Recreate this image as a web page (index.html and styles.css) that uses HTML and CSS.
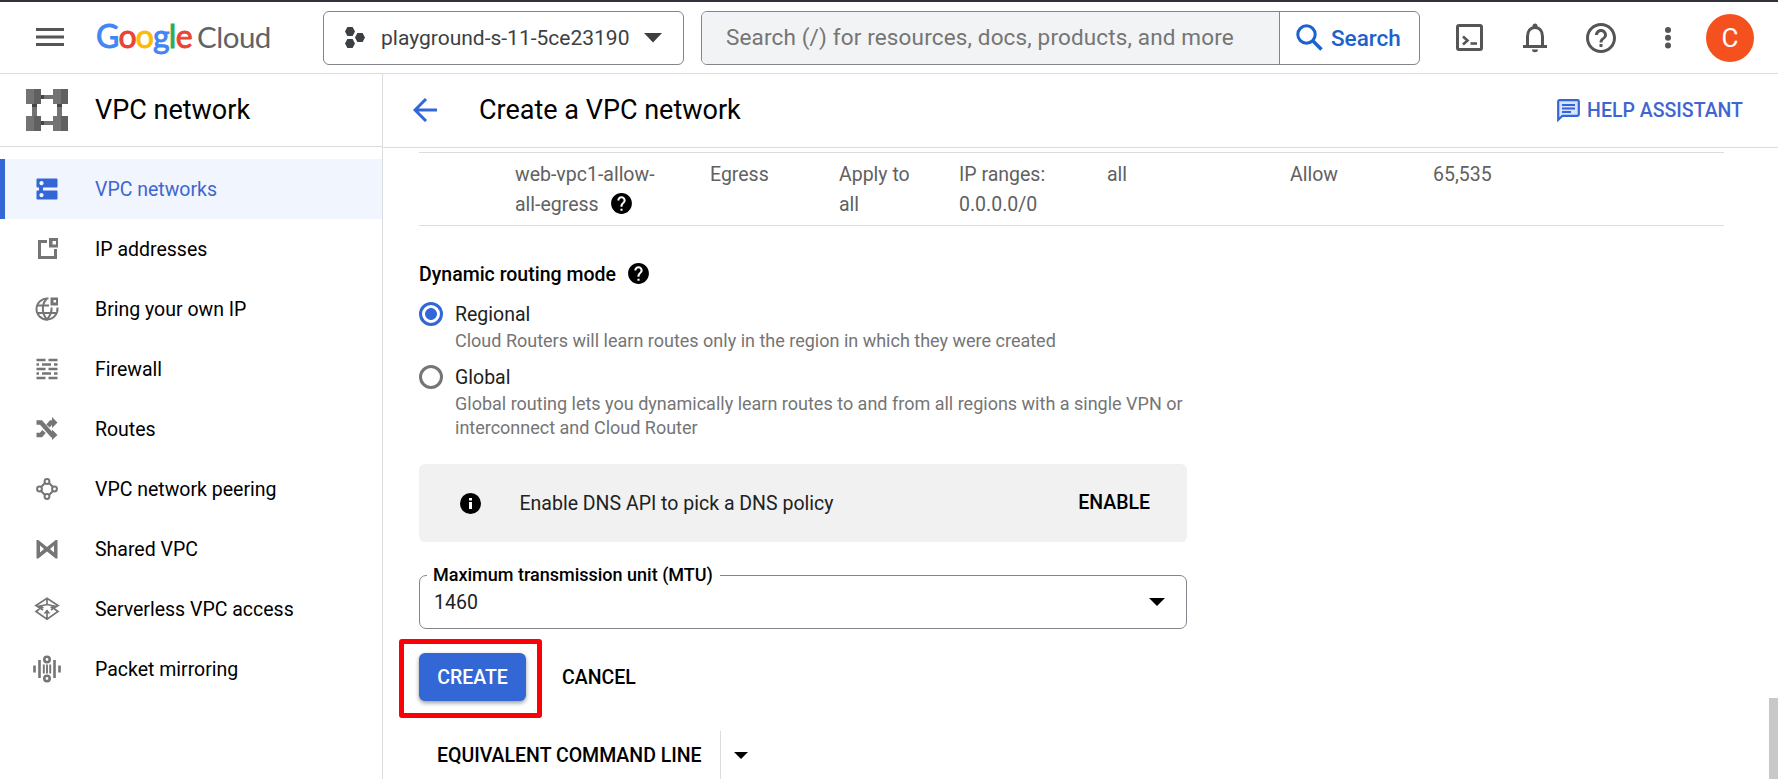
FILE: index.html
```html
<!DOCTYPE html>
<html lang="en">
<head>
<meta charset="utf-8">
<title>Create a VPC network</title>
<link rel="stylesheet" href="styles.css">
</head>
<body>
<header class="topbar">
  <svg class="menu" width="28" height="18" viewBox="0 0 28 18"><path d="M0 1.500h28M0 9h28M0 16.500h28" stroke="#555" stroke-width="3"/></svg>
  <div class="logo"><span class="google"><span class="b">G</span><span class="r">o</span><span class="y">o</span><span class="b">g</span><span class="g">l</span><span class="r">e</span></span><span class="cloud">Cloud</span></div>
  <div class="project">
    <svg width="20" height="22" viewBox="0 0 20 22" fill="#3c4043"><path d="M2.400 0h5.200L10 4.500 7.600 9H2.400L0 4.500zM12.400 6h5.200L20 10.500 17.600 15h-5.200L10 10.500zM2.400 12h5.200L10 16.500 7.600 21H2.400L0 16.500z"/></svg>
    <span class="project-name">playground-s-11-5ce23190</span>
    <svg width="18" height="10" viewBox="0 0 18 10"><path d="M0 0h18L9 9.500z" fill="#3c4043"/></svg>
  </div>
  <div class="search">
    <div class="search-input">Search (/) for resources, docs, products, and more</div>
    <div class="search-button">
      <svg width="27" height="27" viewBox="0 0 27 27" fill="none" stroke="#1c62cc"><circle cx="10.500" cy="10.500" r="8.700" stroke-width="3"/><path d="M16.500 16.500l9 9" stroke-width="3.600"/></svg>
      <span>Search</span>
    </div>
  </div>
  <div class="tools">
    <svg class="shell" width="27" height="27" viewBox="0 0 27 27" fill="none" stroke="#555"><rect x="1.500" y="1.500" width="24" height="24" rx="1.500" stroke-width="3"/><path d="M7 12.500l4.500 4-4.500 4" stroke-width="2.600"/><path d="M14.500 19.500H21" stroke-width="2.600"/></svg>
    <svg class="bell" width="24" height="30" viewBox="0 0 24 30"><path d="M4.500 23V13.500C4.500 8 7.500 4.500 12 4.500s7.500 3.500 7.500 9V23" fill="none" stroke="#555" stroke-width="3"/><path d="M0 22h24v3H0z" fill="#555"/><circle cx="12" cy="3" r="2.500" fill="#555"/><path d="M9 26.500h6a3 2.800 0 0 1-6 0z" fill="#555"/></svg>
    <svg class="help" viewBox="0 0 24 24" fill="#555"><path d="M11 18h2v-2h-2v2zm1-16C6.480 2 2 6.480 2 12s4.480 10 10 10 10-4.480 10-10S17.520 2 12 2zm0 18c-4.410 0-8-3.590-8-8s3.590-8 8-8 8 3.590 8 8-3.590 8-8 8zm0-14c-2.210 0-4 1.790-4 4h2c0-1.100.9-2 2-2s2 .9 2 2c0 2-3 1.750-3 5h2c0-2.250 3-2.500 3-5 0-2.210-1.790-4-4-4z"/></svg>
    <svg class="more" width="6" height="22" viewBox="0 0 6 22" fill="#555"><circle cx="3" cy="3" r="3"/><circle cx="3" cy="10.800" r="3"/><circle cx="3" cy="18.500" r="3"/></svg>
    <div class="avatar">C</div>
  </div>
</header>
<div class="body">
  <aside class="sidebar">
    <div class="product">
      <svg width="42" height="42" viewBox="0 0 42 42"><path d="M6 15h5v12H6zM31 15h5v12h-5zM15 6h12v4H15zM15 32h12v4H15z" fill="#737373"/><path d="M6 15h5v3H6zM31 15h5v3h-5zM15 6h3v4h-3zM15 32h3v4h-3z" fill="#444"/><path d="M0 0h15v15H0zM27 0h15v15H27zM0 27h15v15H0zM27 27h15v15H27z" fill="#737373"/><path d="M8 0h7v15H8zM35 0h7v15h-7zM8 27h7v15H8zM35 27h7v15h-7z" fill="#606060"/></svg>
      <span>VPC network</span>
    </div>
    <nav class="nav">
      <div class="item active"><svg viewBox="0 0 28 28"><path fill="#3367d6" fill-rule="evenodd" d="M4.500 3.500h19a1 1 0 0 1 1 1v7a1 1 0 0 1-1 1H10v3h13.500a1 1 0 0 1 1 1v7a1 1 0 0 1-1 1h-19a1 1 0 0 1-1-1v-7a1 1 0 0 1 1-1H6v-3H4.500a1 1 0 0 1-1-1v-7a1 1 0 0 1 1-1zM8.500 6a2.100 2.100 0 1 0 .01 0zM8.500 18a2.100 2.100 0 1 0 .01 0z"/></svg><span>VPC networks</span></div>
      <div class="item"><svg viewBox="0 0 28 28"><path d="M14 6.500H6.500v16h16V14" fill="none" stroke="#757575" stroke-width="3"/><path fill="#757575" fill-rule="evenodd" d="M16 3h9v9.500h-9zM19.500 6v3.500H23V6z"/></svg><span>IP addresses</span></div>
      <div class="item"><svg viewBox="0 0 28 28"><g fill="none" stroke="#757575" stroke-width="2"><path d="M15.500 3.600A10.500 10.500 0 1 0 24.400 12.500"/><path d="M13.500 4C8.500 9.500 8.500 18.500 14 24.500c3.500-4 4.800-8 4.600-12M4.500 10.500h11.500M4.500 18h19"/></g><path fill="#757575" fill-rule="evenodd" d="M17.500 2.500H25v8h-7.500zM20.500 5v2.500H23V5z"/></svg><span>Bring your own IP</span></div>
      <div class="item"><svg viewBox="0 0 28 28"><path fill="none" stroke="#757575" stroke-width="2.700" d="M3.500 5h9m3 0h9M3.500 9.500H6m3 0h9m3 0h3.500M3.500 14h9m3 0h9M3.500 18.500H6m3 0h9m3 0h3.500M3.500 23h9m3 0h9"/></svg><span>Firewall</span></div>
      <div class="item"><svg viewBox="0 0 28 28"><g fill="none" stroke="#757575" stroke-width="4.500"><path d="M3.500 7.500H8l11 12.500h2M3.500 20H8l3-3.500M15 11l3-3.500h3"/></g><path fill="#757575" d="M19 2l5.500 5.500L19 13zM19 14.500l5.500 5.500L19 25z"/></svg><span>Routes</span></div>
      <div class="item"><svg viewBox="0 0 28 28"><g fill="none" stroke="#757575" stroke-width="2"><circle cx="14" cy="6.500" r="2.400"/><circle cx="6.500" cy="14" r="2.400"/><circle cx="21.500" cy="14" r="2.400"/><circle cx="14" cy="21.500" r="2.400"/><path d="M12 8l-4 4M16 8l4 4M8 16l4 4M20 16l-4 4"/></g></svg><span>VPC network peering</span></div>
      <div class="item"><svg viewBox="0 0 28 28"><path fill="#757575" fill-rule="evenodd" d="M3.500 5h1.800L14 12l8.700-7h1.800v18.500h-1.800L14 16.500l-8.700 7H3.500zM7 10.500v7l4-3.500zM21 10.500v7L17 14z"/></svg><span>Shared VPC</span></div>
      <div class="item"><svg viewBox="0 0 28 28"><path fill="none" stroke="#757575" stroke-width="1.700" d="M10.500 12.800L3 10.500l11-7.300 11 7.300-7.500 2.300M14 3.200v7.300M3 10.500l1.500 1L14 9.500l9.500 2 1.500-1M6.500 14L3 16.500l11 7.800 11-7.800-3.500-2.500M3 10.500l7 4.500M25 10.500l-7 4.500M14 24v-9"/><path d="M10.500 18.500l3.500-4 3.500 4z" fill="#757575"/></svg><span>Serverless VPC access</span></div>
      <div class="item"><svg viewBox="0 0 28 28"><g fill="none" stroke="#757575" stroke-width="2.600"><path d="M1.500 10.500v7M6.500 5v18M21.500 5v18M26.500 10.500v7"/><path d="M10.800 9.500v9M14 9.500v9M17.200 9.500v9" stroke-width="1.900"/><circle cx="14" cy="4.500" r="2.700"/><circle cx="14" cy="23.500" r="2.700"/></g></svg><span>Packet mirroring</span></div>
    </nav>
  </aside>
  <main class="main">
    <div class="page-head">
      <svg class="back" width="24" height="24" viewBox="0 0 24 24" fill="none" stroke="#3367d6" stroke-width="3"><path d="M24 12H2.500M13 1L2 12l11 11"/></svg>
      <h1>Create a VPC network</h1>
      <div class="assistant">
        <svg width="23" height="23" viewBox="0 0 23 23"><path d="M2.500 1.200h18a1.300 1.300 0 0 1 1.300 1.300v13a1.300 1.300 0 0 1-1.300 1.300H5.500l-4.300 4V2.500a1.300 1.300 0 0 1 1.300-1.300z" fill="#d9e3fb" stroke="#3367d6" stroke-width="2.200"/><path d="M5 6h13M5 9.500h13M5 13h9" stroke="#3367d6" stroke-width="2"/></svg>
        <span>HELP ASSISTANT</span>
      </div>
    </div>
    <div class="content">
      <div class="rule">
        <div class="rule-name">web-vpc1-allow-<br>all-egress <svg class="q" viewBox="0 0 24 24"><path d="M12 2C6.480 2 2 6.480 2 12s4.480 10 10 10 10-4.480 10-10S17.520 2 12 2zm1 17h-2v-2h2v2zm2.070-7.750l-.9.920C13.450 12.900 13 13.500 13 15h-2v-.5c0-1.100.45-2.100 1.170-2.830l1.240-1.260c.37-.36.59-.86.590-1.410 0-1.100-.9-2-2-2s-2 .9-2 2H8c0-2.210 1.790-4 4-4s4 1.790 4 4c0 .88-.36 1.680-.93 2.250z"/></svg></div>
        <div>Egress</div><div>Apply to<br>all</div><div>IP ranges:<br>0.0.0.0/0</div><div>all</div><div>Allow</div><div>65,535</div>
      </div>
      <div class="section-title">Dynamic routing mode <svg class="q" viewBox="0 0 24 24"><path d="M12 2C6.480 2 2 6.480 2 12s4.480 10 10 10 10-4.480 10-10S17.520 2 12 2zm1 17h-2v-2h2v2zm2.070-7.750l-.9.920C13.450 12.900 13 13.500 13 15h-2v-.5c0-1.100.45-2.100 1.170-2.830l1.240-1.260c.37-.36.59-.86.590-1.410 0-1.100-.9-2-2-2s-2 .9-2 2H8c0-2.210 1.790-4 4-4s4 1.790 4 4c0 .88-.36 1.680-.93 2.250z"/></svg></div>
      <div class="option">
        <span class="radio on"></span>
        <div><div class="option-name">Regional</div><div class="option-text">Cloud Routers will learn routes only in the region in which they were created</div></div>
      </div>
      <div class="option">
        <span class="radio"></span>
        <div><div class="option-name">Global</div><div class="option-text">Global routing lets you dynamically learn routes to and from all regions with a single VPN or<br>interconnect and Cloud Router</div></div>
      </div>
      <div class="notice">
        <svg width="21" height="21" viewBox="0 0 21 21"><circle cx="10.500" cy="10.500" r="10.500"/><path d="M9 5h3v2.500H9zM9 9h3v7H9z" fill="#fff"/></svg>
        <span class="notice-text">Enable DNS API to pick a DNS policy</span>
        <span class="enable">ENABLE</span>
      </div>
      <div class="field">
        <span class="field-label">Maximum transmission unit (MTU)</span>
        <span class="field-value">1460</span>
        <svg width="16" height="8" viewBox="0 0 16 8"><path d="M0 0h16L8 8z"/></svg>
      </div>
      <div class="actions">
        <div class="highlight"><div class="create">CREATE</div></div>
        <div class="cancel">CANCEL</div>
      </div>
      <div class="command">
        <span class="command-label">EQUIVALENT COMMAND LINE</span>
        <div class="command-more"><svg width="14" height="7" viewBox="0 0 14 7"><path d="M0 0h14L7 7z"/></svg></div>
      </div>
    </div>
    <div class="scroll-thumb"></div>
  </main>
</div>
</body>
</html>
```
FILE: styles.css
```css
* { box-sizing: border-box; }
html, body { height: 100%; }
body {
  margin: 0;
  display: flex;
  flex-direction: column;
  height: 779px;
  overflow: hidden;
  background: #fff;
  color: #000;
  font: 19.5px/30px Roboto, sans-serif;
  white-space: nowrap;
}
svg { flex: none; display: block; }

.topbar {
  flex: none;
  display: flex;
  align-items: center;
  height: 74px;
  padding: 0 0 0 36px;
  border-top: 2px solid #35313a;
  border-bottom: 1px solid #dadce0;
}
.menu { margin-top: -1px; }
.logo {
  width: 226px;
  margin: -3px 0 0 32px;
  display: flex;
  align-items: baseline;
  gap: 7px;
  font: 32px/40px Lato, sans-serif;
  color: #5f6368;
}
.google { letter-spacing: -.8px; width: 94px; -webkit-text-stroke: .9px; }
.cloud { font-size: 29.500px; letter-spacing: -.5px; }
.b { color: #4285f4; }
.r { color: #ea4335; }
.y { color: #fbbc04; }
.g { color: #34a853; }
.project {
  display: flex;
  align-items: center;
  width: 361px;
  height: 54px;
  margin-left: 1px;
  padding: 0 21px 0 21px;
  border: 1px solid #80868b;
  border-radius: 6px;
  font-size: 21px;
  color: #3c4043;
}
.project-name { flex: 1; margin-left: 16px; }
.search {
  display: flex;
  width: 719px;
  height: 54px;
  margin-left: 17px;
  border: 1px solid #80868b;
  border-radius: 6px;
  overflow: hidden;
  font-size: 22.500px;
  line-height: 50px;
}
.search-input {
  flex: 1;
  padding-left: 24px;
  background: #f1f3f4;
  color: #757575;
  letter-spacing: .15px;
}
.search-button {
  display: flex;
  align-items: center;
  gap: 8px;
  width: 140px;
  padding-left: 16px;
  border-left: 1px solid #80868b;
  color: #1c62cc;
  font-weight: 500;
}
.tools { display: flex; align-items: center; margin-left: 36px; }
.bell { margin-left: 40px; }
.help { margin-left: 36px; width: 36px; height: 36px; }
.more { margin-left: 46px; }
.avatar {
  width: 48px;
  height: 48px;
  margin-left: 35px;
  border-radius: 50%;
  background: #f4511e;
  color: #fff;
  text-align: center;
  font-size: 26px;
  line-height: 49px;
}

.body { flex: 1; display: flex; min-height: 0; }
.sidebar { flex: none; width: 383px; border-right: 1px solid #dadce0; }
.product {
  display: flex;
  align-items: center;
  gap: 27px;
  height: 73px;
  padding-left: 26px;
  border-bottom: 1px solid #dadce0;
  font-size: 27px;
}
.nav { padding-top: 12px; }
.item {
  display: flex;
  align-items: center;
  height: 60px;
  padding: 2px 0 0 33.400px;
}
.item svg { width: 28px; height: 28px; margin: -2px 33.600px 0 0; }
.active {
  padding-left: 28.400px;
  border-left: 5px solid #3367d6;
  background: #f0f5fe;
  color: #3f66d0;
}

.main { flex: 1; position: relative; display: flex; flex-direction: column; }
.page-head {
  flex: none;
  display: flex;
  align-items: center;
  height: 74px;
  padding: 0 35px 2px 30px;
  border-bottom: 1px solid #dadce0;
}
h1 { flex: 1; margin: 0 0 0 42px; font: 400 27px/36px Roboto, sans-serif; }
.assistant { display: flex; align-items: center; gap: 7px; padding-top: 2px; color: #3f66d0; font-weight: 500; }
.content { padding: 4px 54px 0 36px; }
.rule {
  display: grid;
  grid-template-columns: 195px 129px 120px 148px 183px 143px auto;
  height: 74px;
  padding: 7px 0 0 96px;
  border: solid #dadce0;
  border-width: 1px 0;
  color: #616161;
}
.q { display: inline-block; width: 25px; height: 25px; margin-left: 5px; vertical-align: -5px; }
.section-title { margin-top: 34px; font-weight: 500; line-height: 30px; }
.option { display: flex; gap: 12px; }
.section-title + .option { margin-top: 9px; }
.radio {
  width: 24px;
  height: 24px;
  margin-top: 3px;
  border: 3px solid #757575;
  border-radius: 50%;
}
.radio.on { border-color: #3367d6; background: radial-gradient(circle, #3367d6 5.500px, #fff 6.300px); }
.option-name { padding-top: 1px; line-height: 29px; color: #212121; }
.option-text { color: #757575; font-size: 18px; line-height: 24px; }
.option + .option { margin-top: 9px; }
.notice {
  display: flex;
  align-items: center;
  width: 768px;
  height: 78px;
  margin-top: 24px;
  padding: 0 37px 0 41px;
  border-radius: 6px;
  background: #f1f1f1;
}
.notice-text { flex: 1; margin-left: 38.500px; padding-top: 2px; color: #212121; }
.enable { font-weight: 500; }
.field {
  position: relative;
  display: flex;
  align-items: center;
  width: 768px;
  height: 54px;
  margin-top: 33px;
  padding: 0 21px 0 14px;
  border: 1px solid #80868b;
  border-radius: 7px;
}
.field-label {
  position: absolute;
  left: 7px;
  top: -16px;
  padding: 0 7px 0 6px;
  background: #fff;
  font-size: 18px;
  font-weight: 500;
}
.field-value { flex: 1; padding-top: 2px; color: #212121; }
.actions { display: flex; align-items: center; margin: 10px 0 0 -20px; }
.highlight {
  display: flex;
  width: 143px;
  height: 79px;
  padding: 9px 11px 12px 15px;
  border: 5px solid #fb0007;
  border-radius: 3px;
}
.create {
  width: 107px;
  height: 48px;
  border-radius: 6px;
  background: #3367d6;
  box-shadow: 0 2px 4px rgba(0, 0, 0, .4);
  color: #fff;
  font-weight: 500;
  line-height: 50px;
  text-align: center;
}
.cancel { margin-left: 20px; font-weight: 500; margin-top: -1px; }
.command { display: flex; height: 48px; margin-top: 13px; line-height: 50px; font-weight: 500; }
.command-label { width: 301px; padding-left: 18px; }
.command-more { padding: 21px 13px; border-left: 1px solid #dadce0; }
.scroll-thumb {
  position: absolute;
  right: 0;
  top: 624px;
  bottom: 0;
  width: 9px;
  background: #c8c8c8;
}
```
